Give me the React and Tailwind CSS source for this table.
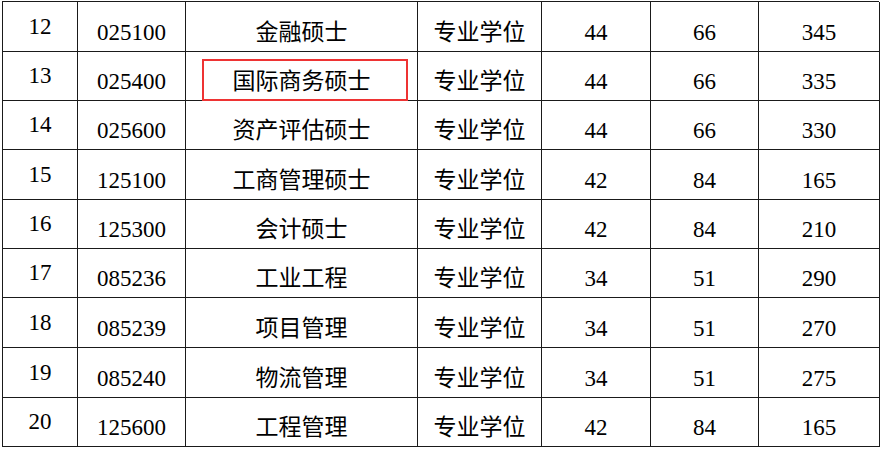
import React from "react";

const rows = [
  { no: "12", code: "025100", name: "金融硕士", type: "专业学位", a: "44", b: "66", c: "345", h: "h-[50px]" },
  { no: "13", code: "025400", name: "国际商务硕士", type: "专业学位", a: "44", b: "66", c: "335", h: "h-[49px]", mark: true },
  { no: "14", code: "025600", name: "资产评估硕士", type: "专业学位", a: "44", b: "66", c: "330", h: "h-[49px]" },
  { no: "15", code: "125100", name: "工商管理硕士", type: "专业学位", a: "42", b: "84", c: "165", h: "h-[50px]" },
  { no: "16", code: "125300", name: "会计硕士", type: "专业学位", a: "42", b: "84", c: "210", h: "h-[49px]" },
  { no: "17", code: "085236", name: "工业工程", type: "专业学位", a: "34", b: "51", c: "290", h: "h-[49px]" },
  { no: "18", code: "085239", name: "项目管理", type: "专业学位", a: "34", b: "51", c: "270", h: "h-[50px]" },
  { no: "19", code: "085240", name: "物流管理", type: "专业学位", a: "34", b: "51", c: "275", h: "h-[50px]" },
  { no: "20", code: "125600", name: "工程管理", type: "专业学位", a: "42", b: "84", c: "165", h: "h-[49px]" },
];

const cell = "border-r border-b border-[#1a1a1a] flex items-center justify-center";
const low = cell + " pt-[11px]";

export default function App() {
  return (
    <div
      className="w-[882px] h-[449px] bg-white overflow-hidden text-black text-[23px] leading-none"
      style={{ fontFamily: '"Liberation Serif", "Noto Sans CJK SC", serif' }}
    >
      <div className="ml-[2px] mt-[1px] w-[877px] border-l border-t border-[#1a1a1a]">
        {rows.map((r) => (
          <div
            key={r.no}
            className={`grid grid-cols-[75px_108px_232px_124px_109px_108px_121px] ${r.h}`}
          >
            <div className={cell + " pb-[1px]"}>{r.no}</div>
            <div className={low}>{r.code}</div>
            <div className={low + " relative"}>
              {r.name}
              {r.mark && (
                <div className="absolute left-[16px] top-[7px] w-[206px] h-[42px] border-2 border-[#ee3333]" />
              )}
            </div>
            <div className={low}>{r.type}</div>
            <div className={low}>{r.a}</div>
            <div className={low}>{r.b}</div>
            <div className={low}>{r.c}</div>
          </div>
        ))}
      </div>
    </div>
  );
}
